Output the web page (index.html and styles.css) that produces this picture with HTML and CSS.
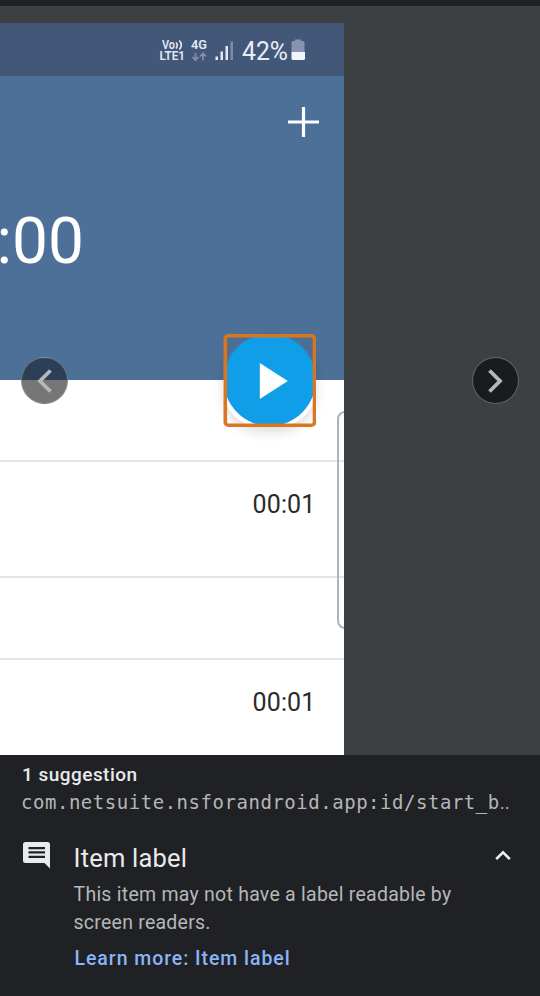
FILE: index.html
```html
<!DOCTYPE html>
<html lang="en">
<head>
<meta charset="utf-8">
<title>Item label</title>
<link rel="stylesheet" href="styles.css">
</head>
<body>
<main class="viewer">
  <section class="stage">
    <div class="phone">
      <div class="status">
        <svg width="154" height="36" viewBox="154 36 154 36" role="img" aria-label="Status">
          <g class="status-small">
            <text x="162" y="49" textLength="13" lengthAdjust="spacingAndGlyphs">Vo</text>
            <text x="159.5" y="60" textLength="25.5" lengthAdjust="spacingAndGlyphs">LTE1</text>
            <text x="191" y="49" textLength="16" lengthAdjust="spacingAndGlyphs">4G</text>
          </g>
          <path d="M176 42.5q2.5 2.5 0 6M179.3 40.5q4 4.5 0 9" fill="none" stroke="#e3e8f5" stroke-width="1.6"/>
          <path d="M195.5 53v6.5M192.500 57l3 3.200 3-3.200M203 60.500v-6.500M200 56.500l3-3.200 3 3.200" fill="none" stroke="#8290ae" stroke-width="1.700"/>
          <path d="M215.500 56.500h2.500v3.500h-2.500zM220.500 51.500h2.500v8.500h-2.500zM225.500 46h2.500v14h-2.500z" fill="#e3e8f5"/>
          <path d="M230.500 41.500h2.500v18.500h-2.500z" fill="#7c8bab"/>
          <text class="percent" x="242" y="60" textLength="46" lengthAdjust="spacingAndGlyphs">42%</text>
          <path d="M291.500 52v-9.500q0-1.500 1.500-1.500h2v-1.500h6v1.500h2q1.500 0 1.500 1.500V52z" fill="#8793b0"/>
          <path d="M291.500 52h13.500v6.500q0 1.500-1.500 1.500H293q-1.500 0-1.500-1.500z" fill="#f2f4fc"/>
        </svg>
      </div>
      <div class="timer-head">
        <svg class="plus" width="31" height="30" viewBox="0 0 31 30"><path d="M0 15h31M15.500 0v30" stroke="#fff" stroke-width="3.200"/></svg>
        <div class="clock">:00</div>
      </div>
      <div class="row row-blank"></div>
      <div class="row row-tall">00:01</div>
      <div class="row row-gap"></div>
      <div class="row row-last">00:01</div>
      <div class="edge-handle"></div>
    </div>
    <div class="fab-box">
      <svg width="93" height="93" viewBox="0 0 93 93">
        <defs><clipPath id="frame"><rect x="2" y="2" width="89" height="89" rx="3"/></clipPath></defs>
        <g clip-path="url(#frame)">
          <circle cx="46.700" cy="46" r="46" fill="#109ee8"/>
        </g>
        <path d="M36.800 29v36l28-18z" fill="#fff"/>
        <rect x="2.300" y="1.800" width="89.200" height="89.400" rx="3" fill="none" stroke="#d97620" stroke-width="3.600"/>
      </svg>
    </div>
    <button class="nav nav-prev" aria-label="Previous"><svg width="46" height="46" viewBox="0 0 46 46"><path d="M29.500 12.500L19 23l10.500 10.500" fill="none" stroke="#b5b7ba" stroke-width="3.800"/></svg></button>
    <button class="nav nav-next" aria-label="Next"><svg width="46" height="46" viewBox="0 0 46 46"><path d="M17.500 12.500L28 23 17.500 33.500" fill="none" stroke="#b5b7b8" stroke-width="3.800"/></svg></button>
  </section>
  <section class="details">
    <h1 class="count">1 suggestion</h1>
    <p class="resource">com.netsuite.nsforandroid.app:id/start_b<span class="dots">..</span></p>
    <div class="suggestion">
      <svg class="comment" width="28" height="28" viewBox="0 0 28 28"><path fill="#e8eaed" fill-rule="evenodd" d="M2.500 0h22Q27 0 27 2.500V26.500L21.500 21H2.500Q0 21 0 18.500V2.500Q0 0 2.500 0zM5.500 5v2.300h16.500V5zM5.500 9.300v2.300h16.500V9.300zM5.500 13.700V16h16.500v-2.300z"/></svg>
      <div class="copy">
        <h2 class="title">Item label</h2>
        <p class="body-text">This item may not have a label readable by<br>screen readers.</p>
        <a class="learn">Learn more: Item label</a>
      </div>
      <svg class="chevron" width="16" height="11" viewBox="0 0 16 11"><path d="M1.200 9.200L8 2.400l6.800 6.800" fill="none" stroke="#eef0f2" stroke-width="2.600"/></svg>
    </div>
  </section>
</main>
</body>
</html>
```
FILE: styles.css
```css
* { box-sizing: border-box; }
body, h1, h2, p { margin: 0; font-weight: 400; }
body {
  background: #202124;
  font-family: Roboto, sans-serif;
}
.viewer {
  width: 540px;
  height: 996px;
  overflow: hidden;
  border-top: 6px solid #202124;
  background: #202124;
}
.stage {
  position: relative;
  height: 749px;
  padding-top: 17px;
  background: #3c4043;
}
.phone {
  position: relative;
  width: 344px;
  height: 732px;
  overflow: hidden;
  background: #fff;
}
.status {
  display: flex;
  justify-content: flex-end;
  height: 53px;
  padding: 13px 36px 0 0;
  background: #435878;
}
.status-small {
  font-size: 12.5px;
  font-weight: 600;
  fill: #e3e8f5;
}
.percent { font-size: 25px; fill: #e9edf9; }
.timer-head {
  display: flex;
  flex-direction: column;
  height: 304px;
  background: #4d7099;
}
.plus {
  align-self: flex-end;
  margin: 31px 25px 0 0;
}
.clock {
  margin: 65px 0 0 -3.5px;
  font-size: 64px;
  line-height: 80px;
  color: #fff;
}
.row {
  padding-right: 28.5px;
  border-bottom: 2px solid #e4e4e4;
  font-size: 25px;
  line-height: 30px;
  letter-spacing: .15px;
  text-align: right;
  color: #2b2b2b;
}
.row-blank { height: 82px; }
.row-tall { height: 116px; padding-top: 28px; }
.row-gap { height: 82px; }
.row-last { padding-top: 28px; border: 0; }
.edge-handle {
  position: absolute;
  top: 388px;
  right: -10px;
  width: 17px;
  height: 218px;
  border: 2px solid #b2b2b2;
  border-radius: 8px;
}
.fab-box {
  position: absolute;
  top: 328px;
  left: 223px;
  width: 93px;
  height: 93px;
  border-radius: 38px;
  box-shadow: 0 5px 12px rgba(0, 0, 0, .14);
}
.fab-box svg { display: block; }
.nav {
  position: absolute;
  top: 351px;
  width: 47px;
  height: 47px;
  padding: 0;
  border: 1.5px solid rgba(160, 160, 160, .55);
  border-radius: 50%;
}
.nav svg { display: block; margin: -1px; }
.nav-prev {
  left: 21px;
  background: linear-gradient(#2c3f56 0 22px, #767676 22px);
}
.nav-next { left: 472px; background: #1a1b1e; }
.details { padding: 8px 22px 0; }
.count {
  font-size: 19px;
  font-weight: 500;
  line-height: 24px;
  letter-spacing: .47px;
  color: #e8eaed;
}
.resource {
  margin: 2px 0 0 -1px;
  font-family: "DejaVu Sans Mono", monospace;
  font-size: 19px;
  line-height: 26px;
  letter-spacing: .53px;
  white-space: nowrap;
  color: #b4b6b9;
}
.dots { font-family: Roboto, sans-serif; letter-spacing: 0; }
.suggestion {
  display: flex;
  align-items: flex-start;
  margin-top: 26px;
}
.comment { flex: none; margin: 0 22.500px 0 1px; }
.copy { flex: 1; }
.title {
  font-size: 25.5px;
  line-height: 32px;
  letter-spacing: .2px;
  color: #e8eaed;
}
.body-text {
  margin-top: 7px;
  font-size: 19.5px;
  line-height: 28px;
  letter-spacing: .25px;
  white-space: nowrap;
  color: #b5b7ba;
}
.learn {
  display: block;
  margin-top: 9px;
  padding-left: 1px;
  font-size: 19.5px;
  font-weight: 500;
  line-height: 26px;
  letter-spacing: .94px;
  color: #8ab4f8;
}
.chevron { flex: none; margin: 8px 7px 0 0; }
```
